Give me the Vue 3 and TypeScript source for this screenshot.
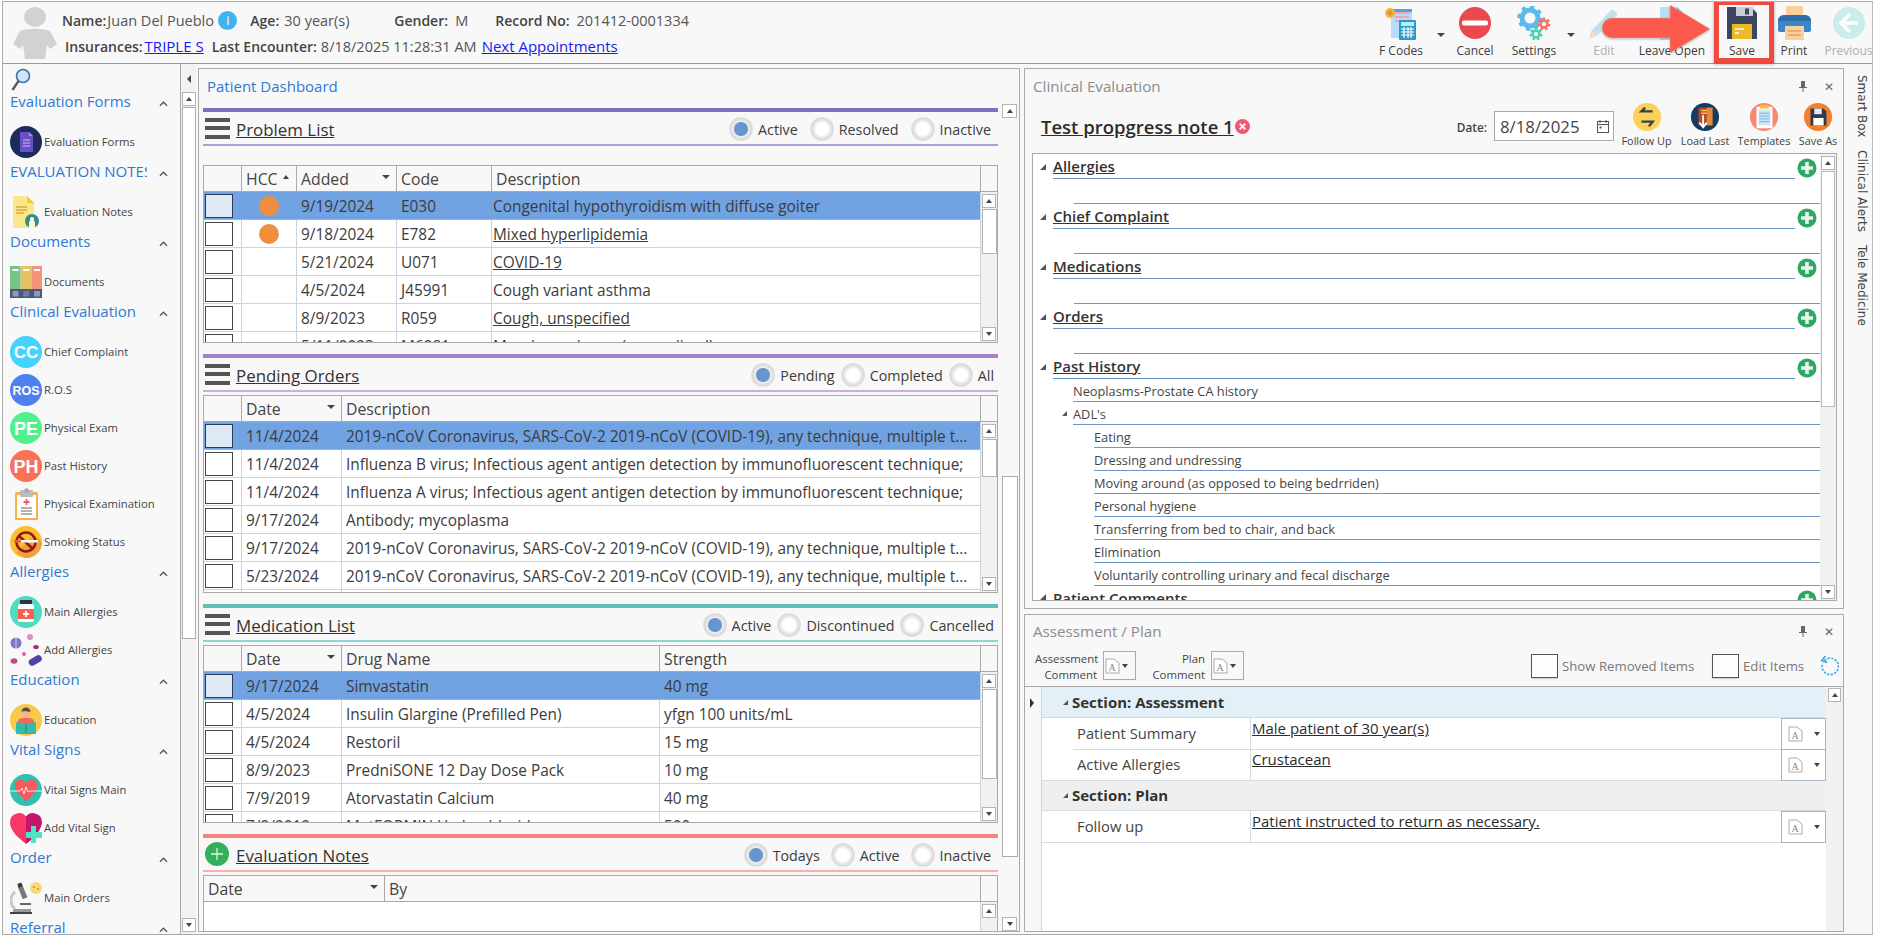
<script setup lang="ts">
const F = 'font-family="Liberation Sans" font-weight="700" fill="#fff" text-anchor="middle"'
const icons: Record<string, string> = {
  form: '<circle cx="16" cy="16" r="16" fill="#1d2a5c"/><path d="M10 6h9l4 4v16H10z" fill="#6b4fc6"/><path d="M19 6l4 4h-4z" fill="#a692e6"/><path d="M13 14h7M13 17h7M13 20h7" stroke="#cfc4f2" stroke-width="1.2"/>',
  notes: '<path d="M3 0h14l7 7v25H3z" fill="#fbe78b"/><path d="M17 0l7 7h-7z" fill="#f5c63f"/><path d="M6 11h11M6 14h11M6 17h8" stroke="#e6a93a" stroke-width="1.4"/><circle cx="22" cy="25" r="7" fill="#2e8f8a"/><path d="M19 32v-5a3 3 0 016 0v5z" fill="#fff8d0"/><circle cx="22" cy="23" r="2" fill="#fff"/>',
  docs: '<rect width="10.6" height="32" fill="#78c38a"/><rect x="10.7" width="10.6" height="32" fill="#e5c25f"/><rect x="21.4" width="10.6" height="32" fill="#f39678"/><rect x="2.5" y="3" width="6" height="2" fill="#fff"/><rect x="13.2" y="3" width="6" height="2" fill="#fff"/><rect x="24" y="3" width="6" height="2" fill="#fff"/><rect y="23" width="32" height="9" fill="#4c5879"/><rect x="2.5" y="25" width="6" height="5.5" fill="#8b97bb"/><rect x="13.2" y="25" width="6" height="5.5" fill="#717da0"/><rect x="24" y="25" width="6" height="5.5" fill="#8b97bb"/>',
  cc: `<circle cx="16" cy="16" r="16" fill="#45d2fc"/><text x="16" y="22" font-size="17" ${F}>CC</text>`,
  ros: `<circle cx="16" cy="16" r="16" fill="#4f7ff0"/><text x="16" y="20.5" font-size="12.5" ${F}>ROS</text>`,
  pe: `<circle cx="16" cy="16" r="16" fill="#52f08c"/><text x="16" y="22.5" font-size="18" ${F}>PE</text>`,
  ph: `<circle cx="16" cy="16" r="16" fill="#fb7156"/><text x="16" y="22.5" font-size="18" ${F}>PH</text>`,
  exam: '<rect x="5" y="4" width="23" height="28" rx="1.5" fill="#f5b24a"/><rect x="7" y="7" width="19" height="23" fill="#fff"/><rect x="10" y="2" width="13" height="7" rx="1" fill="#bcbcbc"/><circle cx="16.5" cy="2.5" r="2.3" fill="#a9a9a9"/><path d="M16.5 11v6M13.5 14h6" stroke="#ef5a6b" stroke-width="1.8"/><path d="M11 20h11M11 23h11M11 26h11" stroke="#666" stroke-width="1.2"/>',
  smoke: '<circle cx="16" cy="16" r="16" fill="#fbc02d"/><path d="M16 32A16 16 0 0032 16L24 9 6 27z" fill="#e8a33a"/><circle cx="16" cy="16" r="9.5" fill="none" stroke="#9c1414" stroke-width="2.5"/><path d="M9 10l14 13" stroke="#9c1414" stroke-width="2.5"/><rect x="11" y="14" width="17" height="2.5" fill="#fff"/><rect x="4" y="14" width="7" height="2.5" fill="#d96a3a"/>',
  mainAll: '<circle cx="16" cy="16" r="16" fill="#4fdac3"/><rect x="8" y="8" width="16" height="18" rx="2" fill="#fff"/><rect x="10" y="4" width="12" height="4" fill="#2c3345"/><rect x="8" y="13" width="16" height="10" fill="#f8604d"/><path d="M16 15v6M13 18h6" stroke="#fff" stroke-width="1.8"/>',
  addAll: '<circle cx="6" cy="9" r="5.5" fill="#7a78c8"/><path d="M6 3.5v11" stroke="#fff" stroke-width=".7"/><circle cx="20" cy="3" r="3" fill="#e090c0"/><ellipse cx="26" cy="13" rx="2.8" ry="2" fill="#a22d7c"/><circle cx="14" cy="20" r="2" fill="#e858b0"/><ellipse cx="4" cy="27" rx="3.4" ry="2.8" fill="#c04a8a"/><rect x="18" y="23" width="14" height="7" rx="3.5" transform="rotate(-30 25 26)" fill="#5042a8"/>',
  edu: '<circle cx="16" cy="16" r="16" fill="#fbc84e"/><circle cx="16" cy="9" r="4.5" fill="#f3b58c"/><path d="M11.5 8a4.5 4.5 0 019 0c-3 0-6-2-9 0z" fill="#5b4a44"/><path d="M8 16c3-3 13-3 16 0v6H8z" fill="#ef6a5a"/><path d="M6 18l10 2 10-2v12l-10 0-10 0z" fill="#35bba8"/><path d="M16 20v10" stroke="#1f8d7f"/>',
  vital: '<circle cx="16" cy="16" r="16" fill="#2fc0b2"/><path d="M16 27C8 21 5 16 5 12a5.5 5.5 0 0111-2 5.5 5.5 0 0111 2c0 4-3 9-11 15z" fill="#f85a5c"/><path d="M0 17h10l2-3 2 6 2-7 2 5 2-1h12" stroke="#fff" stroke-width=".8" fill="none"/>',
  addVital: '<path d="M16 32C6 24 0 18 0 10A9 9 0 0116 4.5z" fill="#f9386a"/><path d="M16 32c7-5 16-14 16-22A9 9 0 0016 4.5z" fill="#c2176a"/><path d="M21 14h5v6h6v6h-6v5h-5v-5h-5v-6h5z" fill="#4fe3c6"/>',
  orders: '<rect y="30" width="22" height="2" fill="#444"/><rect x="3" y="27" width="18" height="3" fill="#999"/><path d="M5 27a11 11 0 010-17" stroke="#c8c8c8" stroke-width="3" fill="none"/><rect x="10" y="3" width="5" height="14" transform="rotate(-22 12 10)" fill="#777"/><rect x="8" y="1" width="4" height="4" transform="rotate(-22 10 3)" fill="#333"/><rect x="10" y="21" width="11" height="2" fill="#666"/><circle cx="26" cy="6" r="6" fill="#f9d978"/><circle cx="24" cy="5" r="1" fill="#c9803a"/><circle cx="28" cy="7" r="1" fill="#c9803a"/>',
  fcodes: '<rect x="7" y="3" width="21" height="29" fill="#b8dcf7"/><path d="M11 7h14M11 11h14M11 15h14" stroke="#f3a0b8" stroke-width="2"/><path d="M7 3h21v3H7z" fill="#5a9edb"/><rect x="15" y="14" width="17" height="20" rx="1" fill="#2a9cc4"/><rect x="17" y="16" width="13" height="4" fill="#b8ecf5"/><path d="M17 23h13M17 26h13M17 29h13M20 21v11M24 21v11M27 21v11" stroke="#fff" stroke-width="1.2"/><circle cx="6" cy="7" r="5" fill="#f5b63a"/><circle cx="6" cy="7" r="2.5" fill="#e0912b"/>',
  cancel: '<circle cx="17" cy="17" r="16" fill="#e9494f"/><rect x="4" y="14.5" width="26" height="5" rx="2" fill="#fff"/>',
  settings: '<circle cx="13" cy="12" r="8" fill="none" stroke="#5db8ee" stroke-width="5"/><circle cx="13" cy="12" r="11" fill="none" stroke="#5db8ee" stroke-width="3.5" stroke-dasharray="4 4.6"/><circle cx="27" cy="18" r="3.5" fill="none" stroke="#f2705a" stroke-width="2.5"/><circle cx="27" cy="18" r="5.5" fill="none" stroke="#f2705a" stroke-width="2" stroke-dasharray="2.5 2.3"/><circle cx="19" cy="28" r="3.5" fill="none" stroke="#3fd0b0" stroke-width="2.5"/><circle cx="19" cy="28" r="5.5" fill="none" stroke="#3fd0b0" stroke-width="2" stroke-dasharray="2.5 2.3"/>',
  edit: '<path d="M4 25L25 3l6 5-21 22z" fill="#bcdde8"/><path d="M4 25l6 5-8 3z" fill="#f3d9c2"/>',
  open: '<path d="M5 1h17l7 7v26H5z" fill="#b4e0f5"/><path d="M22 1l7 7h-7z" fill="#7fc2e6"/>',
  save: '<path d="M2 1h24l6 6v26H2z" fill="#3a475f"/><rect x="11" y="1" width="17" height="9" fill="#c9ced6"/><rect x="20" y="2.5" width="4" height="6" fill="#3a475f"/><rect x="7" y="18" width="20" height="15" fill="#ecb928"/><path d="M10 23h9M10 27h4" stroke="#fff" stroke-width="1.5"/>',
  print: '<rect x="9" y="0" width="17" height="14" fill="#fbd09c"/><rect x="1" y="12" width="33" height="14" rx="2" fill="#3f86c6"/><path d="M1 15c0-4 3-6 6-6h21c3 0 6 2 6 6z" fill="#2e6fa8"/><rect x="8" y="20" width="19" height="14" fill="#fbd09c"/><path d="M11 25h13M11 29h13" stroke="#c98b55" stroke-width="1.2"/>',
  prev: '<circle cx="17" cy="17" r="16" fill="#c4e9ec"/><path d="M18 8l-9 9 9 9M10 17h16" stroke="#fff" stroke-width="3.5" fill="none"/>',
  follow: '<circle cx="16" cy="16" r="15" fill="#fdd058"/><path d="M22 10H10l4-4M10 21h12l-4 5" stroke="#34405a" stroke-width="2.5" fill="none"/>',
  load: '<circle cx="16" cy="16" r="15" fill="#123c63"/><rect x="9" y="6" width="15" height="19" fill="#b5482f"/><rect x="18" y="6" width="6" height="19" fill="#e08a3a"/><path d="M12 9h6M12 12h6" stroke="#f9c84a" stroke-width="1.5"/><path d="M14 14v13M10 22l4 5 4-5" stroke="#fff" stroke-width="2" fill="none"/>',
  tmpl: '<circle cx="16" cy="16" r="15" fill="#f98871"/><rect x="8" y="5" width="17" height="23" fill="#fff"/><rect x="10" y="8" width="13" height="17" fill="#cfe8f9"/><rect x="12" y="3" width="9" height="4" fill="#f4b942"/><path d="M11 12h11M11 15h11M11 18h11M11 21h11" stroke="#6cb0e0"/>',
  saveAs: '<circle cx="16" cy="16" r="15" fill="#f57f2b"/><path d="M8 7h14l3 3v15H8z" fill="#2f3b52"/><rect x="12" y="7" width="8" height="6" fill="#e8e8e8"/><rect x="11" y="17" width="11" height="8" fill="#fff"/>'
}

const sideGroups = [
  { title: 'Evaluation Forms', items: [{ i: 'form', t: 'Evaluation Forms' }] },
  { title: 'EVALUATION NOTES', items: [{ i: 'notes', t: 'Evaluation Notes' }] },
  { title: 'Documents', items: [{ i: 'docs', t: 'Documents' }] },
  { title: 'Clinical Evaluation', items: [
    { i: 'cc', t: 'Chief Complaint' }, { i: 'ros', t: 'R.O.S' }, { i: 'pe', t: 'Physical Exam' },
    { i: 'ph', t: 'Past History' }, { i: 'exam', t: 'Physical Examination' }, { i: 'smoke', t: 'Smoking Status' }] },
  { title: 'Allergies', items: [{ i: 'mainAll', t: 'Main Allergies' }, { i: 'addAll', t: 'Add Allergies' }] },
  { title: 'Education', items: [{ i: 'edu', t: 'Education' }] },
  { title: 'Vital Signs', items: [{ i: 'vital', t: 'Vital Signs Main' }, { i: 'addVital', t: 'Add Vital Sign' }] },
  { title: 'Order', items: [{ i: 'orders', t: 'Main Orders' }] },
  { title: 'Referral', items: [] as { i: string; t: string }[] }
]

const tools = [
  { i: 'fcodes', t: 'F Codes', w: 70 }, { caret: true, w: 10 },
  { i: 'cancel', t: 'Cancel', w: 58 }, { i: 'settings', t: 'Settings', w: 60 }, { caret: true, w: 14 },
  { i: 'edit', t: 'Edit', w: 52, off: true }, { i: 'open', t: 'Leave Open', w: 84 },
  { i: 'save', t: 'Save', w: 56 }, { i: 'print', t: 'Print', w: 48 },
  { i: 'prev', t: 'Previous', w: 54, off: true, pad: 7 }
]

interface Cell { t?: string; u?: boolean; dot?: boolean }
interface Sec {
  title: string; bar: string; line: string; add?: boolean; radioGap: number; radioEnd: number
  radios: string[]; cols: string; head: { t: string; sort?: string }[]; rows: Cell[][]
  gridTop: number; gridH: number; thumb: number
}
const txt = (...a: string[]): Cell[] => a.map(t => ({ t }))
const covid = '2019-nCoV Coronavirus, SARS-CoV-2 2019-nCoV (COVID-19), any technique, multiple t...'
const sections: Sec[] = [
  {
    title: 'Problem List', bar: '#7b72bd', line: '#a8a2d6', radioGap: 12, radioEnd: 7,
    radios: ['Active', 'Resolved', 'Inactive'], cols: '37px 55px 100px 95px 1fr',
    head: [{ t: '' }, { t: 'HCC', sort: 'up' }, { t: 'Added', sort: 'down' }, { t: 'Code' }, { t: 'Description' }],
    rows: [
      [{ dot: true }, { t: '9/19/2024' }, { t: 'E030' }, { t: 'Congenital hypothyroidism with diffuse goiter' }],
      [{ dot: true }, { t: '9/18/2024' }, { t: 'E782' }, { t: 'Mixed hyperlipidemia', u: true }],
      [{}, { t: '5/21/2024' }, { t: 'U071' }, { t: 'COVID-19', u: true }],
      [{}, { t: '4/5/2024' }, { t: 'J45991' }, { t: 'Cough variant asthma' }],
      [{}, { t: '8/9/2023' }, { t: 'R059' }, { t: 'Cough, unspecified', u: true }],
      [{}, { t: '5/11/2023' }, { t: 'M6281' }, { t: 'Muscle weakness (generalized)' }]
    ],
    gridTop: 19, gridH: 178, thumb: 45
  },
  {
    title: 'Pending Orders', bar: '#a77fc4', line: '#c9aede', radioGap: 6, radioEnd: 4,
    radios: ['Pending', 'Completed', 'All'], cols: '37px 100px 1fr',
    head: [{ t: '' }, { t: 'Date', sort: 'down' }, { t: 'Description' }],
    rows: [
      txt('11/4/2024', covid),
      txt('11/4/2024', 'Influenza B virus; Infectious agent antigen detection by immunofluorescent technique;'),
      txt('11/4/2024', 'Influenza A virus; Infectious agent antigen detection by immunofluorescent technique;'),
      txt('9/17/2024', 'Antibody; mycoplasma'),
      txt('9/17/2024', covid),
      txt('5/23/2024', covid),
      txt('', '')
    ],
    gridTop: 3, gridH: 198, thumb: 38
  },
  {
    title: 'Medication List', bar: '#62bfb8', line: '#8fd6d0', radioGap: 6, radioEnd: 4,
    radios: ['Active', 'Discontinued', 'Cancelled'], cols: '37px 100px 318px 1fr',
    head: [{ t: '' }, { t: 'Date', sort: 'down' }, { t: 'Drug Name' }, { t: 'Strength' }],
    rows: [
      txt('9/17/2024', 'Simvastatin', '40 mg'),
      txt('4/5/2024', 'Insulin Glargine (Prefilled Pen)', 'yfgn 100 units/mL'),
      txt('4/5/2024', 'Restoril', '15 mg'),
      txt('8/9/2023', 'PredniSONE 12 Day Dose Pack', '10 mg'),
      txt('7/9/2019', 'Atorvastatin Calcium', '40 mg'),
      txt('7/9/2019', 'MetFORMIN Hydrochloride', '500 mg')
    ],
    gridTop: 3, gridH: 178, thumb: 90
  },
  {
    title: 'Evaluation Notes', bar: '#f58383', line: '#f7b0b0', add: true, radioGap: 11, radioEnd: 7,
    radios: ['Todays', 'Active', 'Inactive'], cols: '180px 1fr',
    head: [{ t: 'Date', sort: 'down' }, { t: 'By' }],
    rows: [], gridTop: 3, gridH: 60, thumb: 0
  }
]

const treeHeads = ['Allergies', 'Chief Complaint', 'Medications', 'Orders']
const adl = ['Eating', 'Dressing and undressing', 'Moving around (as opposed to being bedrriden)', 'Personal hygiene',
  'Transferring from bed to chair, and back', 'Elimination', 'Voluntarily controlling urinary and fecal discharge']
const evalTools = [
  { i: 'follow', t: 'Follow Up', w: 57 }, { i: 'load', t: 'Load Last', w: 60 },
  { i: 'tmpl', t: 'Templates', w: 58 }, { i: 'saveAs', t: 'Save As', w: 50 }
]
const tabs = ['Smart Box', 'Clinical Alerts', 'Tele Medicine']
</script>

<template>
  <div class="screen">
    <div class="frame">
      <header class="top">
        <svg class="avatar" viewBox="0 0 46 52">
          <ellipse cx="23" cy="10" rx="11" ry="10" fill="#d2d2d2" />
          <path d="M8 24c8-3 22-3 30 0l7 13-7 5-3-4-2 14H13l-2-14-3 4-7-5z" fill="#d2d2d2" />
        </svg>
        <div class="who">
          <div class="who-row first">
            <b class="k">Name:</b><span class="v name">Juan Del Pueblo</span>
            <span class="info">i</span>
            <b class="k age">Age:</b><span class="v years">30 year(s)</span>
            <b class="k gender">Gender:</b><span class="v m">M</span>
            <b class="k">Record No:</b><span class="v rec">201412-0001334</span>
          </div>
          <div class="who-row second">
            <b class="k">Insurances:</b><a class="link ins">TRIPLE S</a>
            <b class="k enc">Last Encounter:</b><span class="v dt">8/18/2025 11:28:31 AM</span>
            <a class="link next">Next Appointments</a>
          </div>
        </div>
        <div class="toolbar">
          <template v-for="(b, n) in tools" :key="n">
            <span v-if="b.caret" class="caret-cell" :style="{ width: b.w + 'px' }"><i class="tri-down"></i></span>
            <div v-else class="tool" :class="{ off: b.off }" :style="{ width: b.w + 'px', paddingLeft: (b.pad || 0) + 'px' }">
              <svg class="tool-ic" viewBox="0 0 34 34" v-html="icons[b.i as string]"></svg>
              <span>{{ b.t }}</span>
            </div>
          </template>
        </div>
        <div class="save-mark"></div>
        <svg class="big-arrow" viewBox="0 0 112 52">
          <path d="M10 15h58V2l40 24-40 24V35H10a10 10 0 010-20z" fill="#fb5a4c" stroke="#c9c9c9" stroke-opacity=".35" />
        </svg>
      </header>

      <div class="body">
        <aside class="side">
          <div class="side-list">
            <svg class="lens" viewBox="0 0 20 24">
              <circle cx="12" cy="8" r="6.5" fill="#cfe6f7" stroke="#3e6fa5" stroke-width="1.6" />
              <path d="M7.5 13L1.5 22" stroke="#5b5b5b" stroke-width="2.4" />
            </svg>
            <section v-for="g in sideGroups" :key="g.title" class="side-group">
              <div class="side-head"><span>{{ g.title }}</span><svg class="chev" viewBox="0 0 10 6"><path d="M1 5l4-4 4 4" fill="none" stroke="#555" stroke-width="1.4" /></svg></div>
              <div class="side-items">
                <div v-for="it in g.items" :key="it.t" class="side-item">
                  <svg class="side-ic" viewBox="0 0 32 32" v-html="icons[it.i]"></svg>
                  <span>{{ it.t }}</span>
                </div>
              </div>
            </section>
          </div>
          <div class="side-scroll">
            <i class="tri-left"></i>
            <div class="sb-btn"><i class="tri-up"></i></div>
            <div class="side-thumb"></div>
            <div class="spacer"></div>
            <div class="sb-btn"><i class="tri-down small"></i></div>
          </div>
        </aside>

        <main class="dash">
          <div class="dash-col">
            <div class="dash-title">Patient Dashboard</div>
            <section v-for="(s, si) in sections" :key="s.title" class="sec">
              <div class="sec-bar" :style="{ background: s.bar }"></div>
              <div class="sec-head" :style="{ borderColor: s.line }">
                <svg v-if="s.add" class="add-ic" viewBox="0 0 24 24"><circle cx="12" cy="12" r="12" fill="#35b05a" /><path d="M12 6v12M6 12h12" stroke="#dff5e5" stroke-width="1.3" /></svg>
                <div v-else class="burger"><i></i><i></i><i></i></div>
                <span class="sec-title">{{ s.title }}</span>
                <div class="radios" :style="{ gap: s.radioGap + 'px', paddingRight: s.radioEnd + 'px' }">
                  <label v-for="(r, ri) in s.radios" :key="r" class="radio">
                    <i class="radio-dot" :class="{ on: ri === 0 }"></i>{{ r }}
                  </label>
                </div>
              </div>
              <div class="grid" :style="{ marginTop: s.gridTop + 'px', height: s.gridH + 'px' }">
                <div class="grid-head" :style="{ gridTemplateColumns: s.cols + ' 17px' }">
                  <div v-for="(h, hi) in s.head" :key="hi" class="hcell">
                    <span>{{ h.t }}</span>
                    <i v-if="h.sort === 'up'" class="tri-up hcc-sort"></i>
                    <i v-if="h.sort === 'down'" class="tri-down sort-end"></i>
                  </div>
                  <div class="hcell"></div>
                </div>
                <div class="grid-mid">
                  <div class="grid-rows">
                    <div v-for="(r, ri) in s.rows" :key="ri" class="grow" :class="{ sel: ri === 0 && si !== 3 }" :style="{ gridTemplateColumns: s.cols }">
                      <div class="gcell chk-cell"><i class="chk"></i></div>
                      <div v-for="(c, ci) in r" :key="ci" class="gcell" :class="{ under: c.u }">
                        <i v-if="c.dot" class="dot"></i><span v-else>{{ c.t }}</span>
                      </div>
                    </div>
                  </div>
                  <div class="vscroll">
                    <div class="sb-btn"><i class="tri-up"></i></div>
                    <div v-if="s.thumb" class="thumb" :style="{ height: s.thumb + 'px' }"></div>
                    <div class="spacer"></div>
                    <div v-if="s.thumb" class="sb-btn"><i class="tri-down small"></i></div>
                  </div>
                </div>
              </div>
            </section>
          </div>
          <div class="dash-scroll">
            <div class="sb-btn"><i class="tri-up"></i></div>
            <div class="dash-gap"></div>
            <div class="dash-thumb"></div>
            <div class="spacer"></div>
            <div class="sb-btn"><i class="tri-down small"></i></div>
          </div>
        </main>

        <div class="right">
          <section class="panel clinical">
            <div class="panel-title">
              <span>Clinical Evaluation</span>
              <svg class="pin" viewBox="0 0 8 11"><path d="M2 0h4v6h2v1H4.5v4h-1V7H0V6h2z" fill="#666" /></svg>
              <span class="x">✕</span>
            </div>
            <div class="note-bar">
              <span class="note-title">Test propgress note 1</span>
              <svg class="note-x" viewBox="0 0 16 16"><circle cx="8" cy="8" r="8" fill="#ee5a6f" /><path d="M5 5l6 6M11 5l-6 6" stroke="#fff" stroke-width="2" /></svg>
              <div class="note-right">
                <b class="date-label">Date:</b>
                <div class="date-input">
                  <span>8/18/2025</span>
                  <svg viewBox="0 0 12 13"><rect x=".5" y="1.5" width="11" height="11" fill="none" stroke="#555" /><path d="M0 4.5h12M3 0v3M9 0v3" stroke="#555" /><rect x="2.5" y="6.5" width="2" height="2" fill="#555" /></svg>
                </div>
                <div class="etools">
                  <div v-for="t in evalTools" :key="t.t" class="etool" :style="{ width: t.w + 'px' }">
                    <svg viewBox="0 0 32 32" v-html="icons[t.i]"></svg>
                    <span>{{ t.t }}</span>
                  </div>
                </div>
              </div>
            </div>
            <div class="tree">
              <div class="tree-main">
                <template v-for="h in treeHeads" :key="h">
                  <div class="t-head">
                    <i class="tri-corner"></i><span class="t-name">{{ h }}</span>
                    <svg class="plus" viewBox="0 0 20 20"><circle cx="10" cy="10" r="9.5" fill="#2fa765" /><path d="M10 4v12M4 10h12" stroke="#e8f6ee" stroke-width="3.6" /></svg>
                  </div>
                  <div class="t-blank"></div>
                </template>
                <div class="t-head">
                  <i class="tri-corner"></i><span class="t-name">Past History</span>
                  <svg class="plus" viewBox="0 0 20 20"><circle cx="10" cy="10" r="9.5" fill="#2fa765" /><path d="M10 4v12M4 10h12" stroke="#e8f6ee" stroke-width="3.6" /></svg>
                </div>
                <div class="t-child lv1">Neoplasms-Prostate CA history</div>
                <div class="t-child lv1 arrowed"><i class="tri-corner small"></i>ADL's</div>
                <div v-for="a in adl" :key="a" class="t-child lv2">{{ a }}</div>
                <div class="t-head clipped">
                  <i class="tri-corner"></i><span class="t-name">Patient Comments</span>
                  <svg class="plus" viewBox="0 0 20 20"><circle cx="10" cy="10" r="9.5" fill="#2fa765" /><path d="M10 4v12M4 10h12" stroke="#e8f6ee" stroke-width="3.6" /></svg>
                </div>
              </div>
              <div class="vscroll tree-scroll">
                <div class="sb-btn"><i class="tri-up"></i></div>
                <div class="tree-thumb"></div>
                <div class="spacer"></div>
                <div class="sb-btn"><i class="tri-down small"></i></div>
              </div>
            </div>
          </section>

          <section class="panel plan">
            <div class="panel-title plan-title">
              <span>Assessment / Plan</span>
              <svg class="pin" viewBox="0 0 8 11"><path d="M2 0h4v6h2v1H4.5v4h-1V7H0V6h2z" fill="#666" /></svg>
              <span class="x">✕</span>
            </div>
            <div class="plan-tools">
              <div class="cmt-label wa">Assessment<br />Comment</div>
              <div class="doc-btn"><svg class="doc" viewBox="0 0 15 16"><path d="M1 1h8l5 4v10H1z" fill="#fff" stroke="#aaa" /><text x="7" y="13" font-size="10" font-family="Liberation Serif" fill="#888" text-anchor="middle">A</text></svg><i class="tri-down small"></i></div>
              <div class="cmt-label wp">Plan<br />Comment</div>
              <div class="doc-btn"><svg class="doc" viewBox="0 0 15 16"><path d="M1 1h8l5 4v10H1z" fill="#fff" stroke="#aaa" /><text x="7" y="13" font-size="10" font-family="Liberation Serif" fill="#888" text-anchor="middle">A</text></svg><i class="tri-down small"></i></div>
              <i class="box c1"></i><span class="chk-text t1">Show Removed Items</span>
              <i class="box c2"></i><span class="chk-text t2">Edit Items</span>
              <svg class="spin" viewBox="0 0 22 24"><path d="M6 6a9 9 0 1 1-2 3" fill="none" stroke="#38a8e8" stroke-width="1.8" stroke-dasharray="2.5 1.5" /><path d="M7 1L3 6l6 2" fill="none" stroke="#38a8e8" stroke-width="1.8" /></svg>
            </div>
            <div class="a-grid">
              <div class="a-gutter"><i class="tri-right"></i></div>
              <div class="a-main">
                <div class="a-sec blue"><i class="tri-corner small"></i>Section: Assessment</div>
                <div class="a-row">
                  <div class="a-label inset">Patient Summary</div>
                  <div class="a-val">Male patient of 30 year(s)</div>
                  <div class="a-btn"><svg class="doc" viewBox="0 0 15 16"><path d="M1 1h8l5 4v10H1z" fill="#fff" stroke="#aaa" /><text x="7" y="13" font-size="10" font-family="Liberation Serif" fill="#888" text-anchor="middle">A</text></svg><i class="tri-down small"></i></div>
                </div>
                <div class="a-row">
                  <div class="a-label">Active Allergies</div>
                  <div class="a-val">Crustacean</div>
                  <div class="a-btn"><svg class="doc" viewBox="0 0 15 16"><path d="M1 1h8l5 4v10H1z" fill="#fff" stroke="#aaa" /><text x="7" y="13" font-size="10" font-family="Liberation Serif" fill="#888" text-anchor="middle">A</text></svg><i class="tri-down small"></i></div>
                </div>
                <div class="a-sec gray"><i class="tri-corner small"></i>Section: Plan</div>
                <div class="a-row">
                  <div class="a-label">Follow up</div>
                  <div class="a-val">Patient instructed to return as necessary.</div>
                  <div class="a-btn"><svg class="doc" viewBox="0 0 15 16"><path d="M1 1h8l5 4v10H1z" fill="#fff" stroke="#aaa" /><text x="7" y="13" font-size="10" font-family="Liberation Serif" fill="#888" text-anchor="middle">A</text></svg><i class="tri-down small"></i></div>
                </div>
              </div>
              <div class="a-scroll"><div class="sb-btn"><i class="tri-up"></i></div></div>
            </div>
          </section>
        </div>

        <nav class="tabs">
          <span v-for="t in tabs" :key="t">{{ t }}</span>
        </nav>
      </div>
    </div>
  </div>
</template>

<style>
html, body { margin: 0; background: #fff; }
</style>

<style scoped>
.screen {
  width: 1884px; height: 941px; box-sizing: border-box; padding: 1px 0 0 2px; overflow: hidden;
  font-family: "Open Sans", "Liberation Sans", sans-serif; font-size: 14px; color: #3c3c3c; background: #fff;
}
.frame {
  width: 1871px; height: 934px; box-sizing: border-box; border: 1px solid #aaa; border-right-color: #bbb;
  background: #f8f8f8; display: flex; flex-direction: column; overflow: hidden;
}
i { display: block; flex: none; }
.spacer { flex: 1; }

.top { height: 61px; flex: none; display: flex; position: relative; border-bottom: 1px solid #7c9fcf; }
.avatar { width: 46px; height: 52px; margin: 5px 0 0 9px; flex: none; }
.who { margin-left: 4px; width: 680px; flex: none; }
.who-row { display: flex; align-items: center; white-space: nowrap; font-size: 14.5px; }
.who-row > * { flex: none; }
.who-row.first { height: 26px; margin-top: 5px; }
.who-row.second { height: 24px; margin-top: 1px; }
.k { font-weight: 600; color: #444; font-size: 14px; }
.v { color: #555; }
.name { margin-left: 1px; width: 110px; }
.info { width: 19px; height: 19px; border-radius: 50%; background: #3fb4f0; color: #fff; text-align: center; line-height: 19px; font-size: 13px; margin-left: 1px; }
.age { margin-left: 13px; }
.years { margin-left: 5px; width: 110px; }
.gender { width: 54px; }
.m { margin-left: 7px; width: 40px; }
.rec { margin-left: 7px; }
.second .k:first-child { margin-left: 3px; }
.link { color: #1a1aee; text-decoration: underline; font-size: 15px; }
.ins { margin-left: 2px; }
.enc { margin-left: 8px; }
.dt { margin-left: 4px; }
.next { margin-left: 5px; }
.toolbar { margin-left: auto; display: flex; }
.tool { box-sizing: border-box; display: flex; flex-direction: column; align-items: center; font-size: 12px; color: #3c3c3c; white-space: nowrap; flex: none; }
.tool.off { color: #aeaeae; }
.tool-ic { width: 34px; height: 34px; margin-top: 4px; margin-bottom: 2px; }
.tool.off .tool-ic { opacity: .85; }
.caret-cell { display: flex; justify-content: center; padding-top: 31px; box-sizing: border-box; flex: none; }
.tri-down { width: 0; height: 0; border-left: 4px solid transparent; border-right: 4px solid transparent; border-top: 4px solid #444; }
.tri-down.small { border-left-width: 3.5px; border-right-width: 3.5px; border-top-width: 4px; }
.tri-up { width: 0; height: 0; border-left: 3.5px solid transparent; border-right: 3.5px solid transparent; border-bottom: 4px solid #444; }
.tri-left { width: 0; height: 0; border-top: 4px solid transparent; border-bottom: 4px solid transparent; border-right: 4px solid #444; }
.tri-right { width: 0; height: 0; border-top: 5px solid transparent; border-bottom: 5px solid transparent; border-left: 4px solid #333; }
.tri-corner { width: 0; height: 0; border-left: 6px solid transparent; border-bottom: 6px solid #555; }
.tri-corner.small { border-left-width: 5px; border-bottom-width: 5px; }
.save-mark { position: absolute; left: 1711px; top: -2px; width: 60px; height: 63px; box-sizing: border-box; border: 5px solid #ef4a40; box-shadow: 0 1px 3px rgba(0,0,0,.35); }
.big-arrow { position: absolute; left: 1599px; top: 1px; width: 112px; height: 52px; filter: drop-shadow(0 1px 1px rgba(0,0,0,.25)); }

.body { flex: 1; display: flex; min-height: 0; }

.side { width: 192px; flex: none; display: flex; border-right: 1px solid #aaa; box-sizing: border-box; background: #f8f8f8; }
.side-list { width: 177px; flex: none; overflow: hidden; padding-left: 7px; box-sizing: border-box; }
.lens { width: 20px; height: 24px; display: block; margin: 4px 0 -3px 1px; }
.side-head { height: 35px; flex: none; display: flex; color: #2f78d4; font-size: 15px; line-height: 24px; white-space: nowrap; position: relative; }
.side-head span { width: 137px; overflow: hidden; }
.chev { width: 9px; height: 6px; margin: 12px 0 0 12px; flex: none; }
.side-items { display: flex; flex-direction: column; gap: 3px; padding-top: 2px; margin-bottom: -2px; }
.side-item { height: 35px; display: flex; align-items: flex-start; font-size: 11.3px; color: #444; white-space: nowrap; }
.side-item span { line-height: 32px; margin-left: 2px; }
.side-ic { width: 32px; height: 32px; flex: none; }
.side-scroll { width: 15px; flex: none; display: flex; flex-direction: column; border-left: 1px solid #aaa; box-sizing: content-box; background: #f2f2f2; align-items: center; position: relative; }
.side-scroll .tri-left { margin: 11px 0 9px; }
.side-scroll .sb-btn { width: 14px; }
.side-thumb { width: 12px; height: 530px; background: #fff; border: 1px solid #aaa; box-sizing: content-box; margin-top: 1px; }
.side-scroll > .sb-btn:last-child { margin-bottom: 2px; }
.sb-btn { width: 14px; height: 14px; flex: none; box-sizing: border-box; background: #fff; border: 1px solid #b4b4b4; display: flex; align-items: center; justify-content: center; }

.dash { width: 822px; height: 864px; flex: none; margin: 4px 0 0 3px; display: flex; box-sizing: border-box; border: 1px solid #aaa; background: #f8f8f8; overflow: hidden; }
.dash-col { width: 799px; flex: none; padding-left: 4px; box-sizing: border-box; }
.dash-title { height: 39px; color: #2f78d4; font-size: 15px; line-height: 34px; padding-left: 4px; }
.sec { margin-bottom: 11px; }
.sec-bar { height: 4px; }
.sec-head { height: 32px; box-sizing: content-box; border-bottom: 2px solid; display: flex; align-items: center; }
.burger { width: 25px; margin-left: 2px; flex: none; display: flex; flex-direction: column; gap: 4.5px; }
.burger i { height: 4px; background: #555; }
.add-ic { width: 24px; height: 24px; margin-left: 2px; flex: none; margin-right: 1px; }
.sec-title { font-size: 16.9px; color: #333; text-decoration: underline; margin: 3px 0 0 6px; white-space: nowrap; }
.radios { margin: 2px 0 0 auto; display: flex; align-items: center; }
.radio { display: flex; align-items: center; gap: 5px; font-size: 14.3px; color: #3c3c3c; }
.radio-dot { width: 24px; height: 24px; border-radius: 50%; background: radial-gradient(circle at 50% 50%, #fff 0 6px, #ececec 8px, #d8d8d8 11px, #e6e6e6 12px); position: relative; }
.radio-dot.on { background: radial-gradient(circle at 50% 50%, #6796cf 0 6.5px, #eee 7.5px, #d8d8d8 11px, #e6e6e6 12px); }
.grid { border: 1px solid #a9a9a9; box-sizing: border-box; display: flex; flex-direction: column; overflow: hidden; background: #fff; }
.grid-head { height: 26px; flex: none; display: grid; box-sizing: border-box; border-bottom: 1px solid #a9a9a9; background: #f8f8f8; }
.hcell { display: flex; align-items: center; padding-left: 4px; border-left: 1px solid #a9a9a9; font-size: 15.8px; color: #444; position: relative; white-space: nowrap; min-width: 0; }
.hcell:first-child { border-left: 0; }
.hcc-sort { margin-left: 5px; margin-top: -3px; }
.sort-end { position: absolute; right: 6px; top: 9px; }
.grid-mid { flex: 1; display: flex; min-height: 0; }
.grid-rows { flex: 1; min-width: 0; overflow: hidden; }
.grow { height: 28px; display: grid; box-sizing: border-box; border-bottom: 1px solid #c9d4e2; }
.grow.sel { background: #71a2e2; border-bottom-color: #8fb6e8; }
.gcell { display: flex; align-items: center; padding: 2px 0 0 4px; border-left: 1px solid #c9d4e2; font-size: 15.4px; color: #3c3c3c; white-space: nowrap; overflow: hidden; min-width: 0; }
.gcell:first-child { border-left: 0; }
.grow.sel .gcell { border-left-color: transparent; }
.sec:first-of-type .gcell:last-child { padding-left: 1px; }
.gcell.under span { text-decoration: underline; }
.gcell.chk-cell { padding: 0 0 0 1px; }
.chk { width: 28px; height: 24px; box-sizing: border-box; background: #fff; border: 1px solid #444; }
.grow.sel .chk { background: #dfe9f6; border-color: #2b3a55; }
.dot { width: 20px; height: 20px; border-radius: 50%; background: #ef8f3e; margin: -2px 0 0 13px; }
.vscroll { width: 17px; flex: none; display: flex; flex-direction: column; align-items: center; background: #f1f1f1; padding: 2px 0 1px; box-sizing: border-box; border-left: 1px solid #c9d4e2; }
.thumb { width: 15px; box-sizing: border-box; background: #fff; border: 1px solid #b4b4b4; margin-top: 1px; }
.dash-scroll { flex: 1; display: flex; flex-direction: column; padding: 35px 0 0 4px; box-sizing: border-box; }
.dash-gap { height: 358px; flex: none; }
.dash-thumb { width: 16px; height: 381px; box-sizing: border-box; background: #fff; border: 1px solid #aaa; flex: none; }
.dash-scroll .sb-btn { width: 15px; }

.right { width: 820px; flex: none; margin: 4px 0 0 4px; display: flex; flex-direction: column; gap: 5px; }
.panel { border: 1px solid #aaa; box-sizing: border-box; background: #f8f8f8; display: flex; flex-direction: column; overflow: hidden; }
.clinical { height: 541px; flex: none; }
.plan { height: 318px; flex: none; }
.panel-title { height: 33px; flex: none; display: flex; align-items: center; padding: 1px 0 0 8px; box-sizing: border-box; color: #8c8c8c; font-size: 15.2px; }
.plan-title { height: 30px; padding-top: 2px; }
.pin { width: 8px; height: 11px; margin-left: auto; }
.x { width: 12px; margin: 0 7px 0 17px; font-size: 12px; color: #666; }
.note-bar { height: 48px; flex: none; display: flex; align-items: flex-start; }
.note-title { font-size: 18.5px; font-weight: 600; color: #2c2c2c; text-decoration: underline; margin: 11px 0 0 16px; white-space: nowrap; line-height: 28px; }
.note-x { width: 15px; height: 15px; margin: 17px 0 0 1px; flex: none; }
.note-right { margin-left: auto; display: flex; align-items: flex-start; }
.date-label { font-size: 11.8px; font-weight: 600; color: #444; margin-top: 17px; }
.date-input { width: 120px; height: 30px; box-sizing: border-box; margin: 9px 4px 0 7px; border: 1px solid #aaa; background: #fff; display: flex; align-items: center; justify-content: space-between; padding: 0 4px 0 5px; font-size: 16.8px; color: #444; }
.date-input svg { width: 12px; height: 13px; }
.etools { display: flex; }
.etool { display: flex; flex-direction: column; align-items: center; font-size: 10.9px; color: #444; white-space: nowrap; }
.etool svg { width: 30px; height: 30px; margin-bottom: 1px; }
.tree { height: 448px; flex: none; margin: 3px 6px 0 7px; border: 1px solid #aaa; background: #fff; display: flex; box-sizing: border-box; overflow: hidden; }
.tree-main { flex: 1; min-width: 0; overflow: hidden; padding-left: 7px; }
.t-head { height: 25px; display: flex; position: relative; align-items: flex-start; }
.t-head .tri-corner { margin: 10px 8px 0 0; }
.t-head::after { content: ""; position: absolute; left: 13px; right: 25px; bottom: 0; height: 1px; background: #6d96cb; }
.t-name { font-size: 15px; font-weight: 600; color: #333; text-decoration: underline; line-height: 25px; margin-left: -1px; }
.plus { width: 20px; height: 20px; position: absolute; right: 3px; top: 4px; }
.t-blank { height: 25px; margin-left: 34px; box-sizing: border-box; border-bottom: 1px solid #6d96cb; }
.t-child { height: 23px; box-sizing: border-box; border-bottom: 1px solid #6d96cb; font-size: 12.8px; color: #444; line-height: 24px; white-space: nowrap; display: flex; }
.lv1 { margin-left: 33px; }
.lv2 { margin-left: 54px; }
.arrowed { position: relative; }
.arrowed .tri-corner { position: absolute; left: -11px; top: 9px; }
.t-head.clipped { height: 25px; overflow: hidden; margin-top: 0; }
.t-head.clipped .tri-corner { margin-top: 8px; }
.t-head.clipped::after { display: none; }
.tree-scroll { width: 16px; padding-top: 2px; padding-bottom: 1px; border-left: 0; background: #f1f1f1; }
.tree-thumb { width: 14px; height: 236px; box-sizing: border-box; background: #fff; border: 1px solid #bbb; flex: none; margin-top: 1px; }

.plan-tools { height: 41px; flex: none; display: flex; align-items: flex-start; padding-left: 10px; }
.cmt-label { font-size: 11.4px; line-height: 16px; text-align: right; color: #444; margin-top: 6px; white-space: nowrap; flex: none; }
.wa { width: 62px; }
.wp { width: 69px; }
.doc-btn { width: 33px; height: 29px; box-sizing: border-box; margin: 6px 0 0 6px; border: 1px solid #aaa; display: flex; align-items: center; padding-left: 1px; gap: 2px; flex: none; }
.doc { width: 15px; height: 16px; flex: none; }
.box { width: 27px; height: 24px; box-sizing: border-box; border: 1px solid #555; background: #fdfdfd; margin-top: 9px; box-shadow: 0 1px 1px rgba(0,0,0,.15); }
.c1 { margin-left: 287px; }
.c2 { margin-left: 17px; }
.chk-text { font-size: 13.2px; color: #777; margin: 12px 0 0 4px; white-space: nowrap; flex: none; }
.t1 { width: 133px; }
.t2 { width: 61px; }
.spin { width: 20px; height: 24px; margin: 9px 0 0 15px; flex: none; }
.a-grid { flex: 1; min-height: 0; display: flex; background: #fff; border-top: 1px solid #aaa; }
.a-gutter { width: 16px; flex: none; background: #f8f8f8; padding: 11px 0 0 5px; box-sizing: border-box; }
.a-main { width: 785px; flex: none; border-left: 1px solid #d0d4da; box-sizing: border-box; }
.a-sec { height: 31px; box-sizing: border-box; border-bottom: 1px solid #d4dbe2; display: flex; align-items: center; font-weight: 700; font-size: 15px; color: #333; padding-left: 21px; gap: 4px; }
.a-sec.blue { background: #e3f0f8; }
.a-sec.gray { background: #efefef; }
.a-row { height: 31px; display: grid; grid-template-columns: 209px 530px 45px; }
.a-label { padding-left: 35px; border-bottom: 1px solid #d4dbe2; border-right: 1px solid #d4dbe2; font-size: 14.8px; color: #444; line-height: 31px; white-space: nowrap; }
.a-label.inset { margin-left: 31px; padding-left: 4px; }
.a-val { padding-left: 1px; border-bottom: 1px solid #d4dbe2; font-size: 15px; color: #2c2c2c; line-height: 21px; text-decoration: underline; white-space: nowrap; }
.a-btn { box-sizing: border-box; border: 1px solid #a9b4c2; background: #fff; display: flex; align-items: center; padding-left: 6px; gap: 11px; }
.a-scroll { flex: 1; background: #f1f1f1; padding: 1px 0 0 2px; }
.a-scroll .sb-btn { width: 13px; }

.tabs { width: 29px; flex: none; display: flex; flex-direction: column; gap: 13px; padding-top: 11px; align-items: center; box-sizing: border-box; margin-left: 3px; }
.tabs span { writing-mode: vertical-rl; color: #444; font-family: "DejaVu Sans", sans-serif; font-size: 12px; white-space: nowrap; }
</style>
